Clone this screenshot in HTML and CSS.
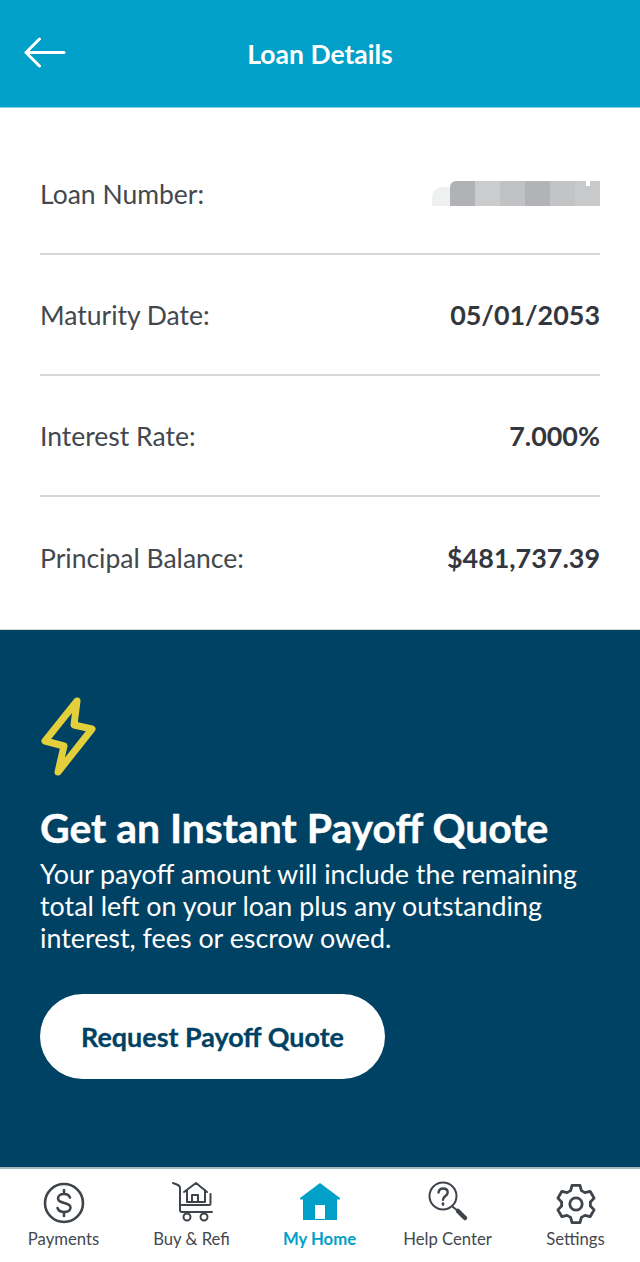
FILE: index.html
```html
<!DOCTYPE html>
<html lang="en">
<head>
  <meta charset="UTF-8" />
  <title>Loan Details</title>
  <link rel="stylesheet" href="styles.css">
</head>
<body>
  <header class="topbar">
    <svg class="back" width="42" height="32" viewBox="0 0 42 32" fill="none" stroke="#fff" stroke-width="3" stroke-linecap="round" stroke-linejoin="round">
      <path d="M40 15.500H2M15.500 2L2 15.500 15.500 29"/>
    </svg>
    <h1>Loan Details</h1>
  </header>

  <section class="details">
    <div class="row">
      <span class="label">Loan Number:</span>
      <div class="mask">
        <i class="blob"></i><i class="c1"></i><i class="c2"></i><i class="c3"></i><i class="c4"></i><i class="c5"></i><i class="c6"></i>
      </div>
    </div>
    <div class="row">
      <span class="label">Maturity Date:</span>
      <span class="value">05/01/2053</span>
    </div>
    <div class="row">
      <span class="label">Interest Rate:</span>
      <span class="value">7.000%</span>
    </div>
    <div class="row">
      <span class="label">Principal Balance:</span>
      <span class="value">$481,737.39</span>
    </div>
  </section>

  <section class="payoff">
    <svg class="bolt" width="58" height="82" viewBox="0 0 58 82" fill="none" stroke="#e3cf3c" stroke-width="7" stroke-linejoin="round">
      <path d="M37 5L5 45 24 50 18 76 52 33 34 29z"/>
    </svg>
    <h2>Get an Instant Payoff Quote</h2>
    <p>Your payoff amount will include the remaining total left on your loan plus any outstanding interest, fees or escrow owed.</p>
    <a class="quote-btn">Request Payoff Quote</a>
  </section>

  <nav class="tabs">
    <div class="tab">
      <svg width="44" height="44" viewBox="0 -1 44 44" fill="none" stroke="#3f444b" stroke-width="2.600" stroke-linecap="round">
        <circle cx="22" cy="22" r="19"/>
        <path d="M28 16.500c-1-2.500-3-3.500-6-3.500-3.500 0-6 1.700-6 4.500 0 6 12.500 3 12.500 9 0 2.800-2.700 4.500-6.500 4.500-3.300 0-5.500-1.300-6.500-4M22 9v4M22 31v4"/>
      </svg>
      <span>Payments</span>
    </div>
    <div class="tab">
      <svg width="44" height="44" viewBox="0 0 44 44" fill="none" stroke="#3f444b" stroke-width="2" stroke-linecap="round" stroke-linejoin="round">
        <path d="M3 3l5 2q2 1 2 3v22q0 2 2 2h30M10 25h29q1.500 0 1.500-1.500V14"/>
        <path d="M14 12L26 3l11 9M17 10v12h18V10M22 22v-7h6v7"/>
        <circle cx="17" cy="37" r="3.500"/>
        <circle cx="34" cy="37" r="3.500"/>
      </svg>
      <span>Buy &amp; Refi</span>
    </div>
    <div class="tab active">
      <svg width="44" height="44" viewBox="0 0 44 44">
        <path fill="#00a0c8" fill-rule="evenodd" d="M22 3L2 18v1.500h3V40h34V19.500h3V18zM17 25h10v14H17z"/>
      </svg>
      <span>My Home</span>
    </div>
    <div class="tab">
      <svg width="44" height="44" viewBox="0 0 44 44" fill="none" stroke="#3f444b" stroke-width="2" stroke-linecap="round">
        <circle cx="17" cy="16" r="13.500"/>
        <path d="M12.500 12.500c.5-2.800 2.200-4 4.500-4 2.800 0 4.700 1.600 4.700 3.900 0 3.600-4.700 3.600-4.700 7.400" stroke-width="2.400"/>
        <path d="M17 23.500v1" stroke-width="2.600"/>
        <path d="M27 27l5 4"/>
        <path d="M32 31l7 7" stroke-width="4.500"/>
      </svg>
      <span>Help Center</span>
    </div>
    <div class="tab">
      <svg width="44" height="44" viewBox="0 0 44 44" fill="none" stroke="#3f444b" stroke-width="2.800" stroke-linejoin="round">
        <g transform="translate(22 24)">
          <path d="M-5.400-13.400L-4-18.600H4L5.400-13.400 8.900-11.400 14.100-12.700 18.100-5.900 14.400-2V2L18.100 5.900 14.100 12.700 8.900 11.400 5.400 13.400 4 18.600H-4L-5.400 13.400-8.900 11.400-14.100 12.700-18.100 5.900-14.400 2V-2L-18.100-5.900-14.100-12.700-8.900-11.400z"/>
          <circle r="6.200"/>
        </g>
      </svg>
      <span>Settings</span>
    </div>
  </nav>
</body>
</html>
```

FILE: styles.css
```css
* {
  box-sizing: border-box;
}
body {
  margin: 0;
  width: 640px;
  height: 1262px;
  background: #fff;
  color: #43484e;
  font-family: Lato, "Open Sans", sans-serif;
  display: flex;
  flex-direction: column;
  overflow: hidden;
}

.topbar {
  height: 108px;
  flex: none;
  background: #00a0c8;
  border-bottom: 1px solid #7fd6ea;
  display: flex;
  align-items: center;
  justify-content: center;
  position: relative;
}
.topbar h1 {
  margin: 0;
  color: #fff;
  font-size: 26.500px;
  font-weight: 700;
}
.back {
  position: absolute;
  left: 24px;
  top: 37px;
}

.details {
  height: 522px;
  flex: none;
  padding: 26px 40px 0;
  border-bottom: 1px solid #d8d8d8;
}
.row {
  height: 121px;
  display: flex;
  align-items: center;
  justify-content: space-between;
  border-bottom: 2px solid #d8d8d8;
}
.row:last-child {
  border-bottom: none;
}
.label {
  font-size: 26.500px;
}
.value {
  font-size: 26.900px;
  font-weight: 700;
  color: #33373d;
}
.mask {
  display: flex;
  height: 25px;
}
.mask i {
  width: 25px;
  background: #c6c8ca;
}
.mask .blob {
  width: 18px;
  margin-top: 6px;
  background: #eff0f0;
  border-radius: 10px 0 0 0;
}
.mask .c1 {
  background: #b0b2b5;
  border-radius: 6px 0 0 0;
}
.mask .c2 {
  background: #cbcccd;
}
.mask .c3 {
  background: #c0c2c4;
}
.mask .c4 {
  background: #b1b3b6;
}
.mask .c5 {
  background: #c3c4c6;
}
.mask .c6 {
  background: #c8c9cb;
  position: relative;
}
.mask .c6::after {
  content: "";
  position: absolute;
  top: 0;
  left: 11px;
  width: 4px;
  height: 5px;
  background: #fff;
}

.payoff {
  flex: 1;
  background: #004263;
  color: #fff;
  padding: 66px 40px 0;
}
.bolt {
  display: block;
}
.payoff h2 {
  margin: 26px 0 6px;
  font-size: 40.900px;
  line-height: 48px;
  font-weight: 700;
  -webkit-text-stroke: 0.4px #fff;
}
.payoff p {
  margin: 0;
  font-size: 26.850px;
  line-height: 32px;
}
.quote-btn {
  margin-top: 40px;
  width: 345px;
  height: 85px;
  border-radius: 43px;
  background: #fff;
  color: #004263;
  font-size: 26.900px;
  font-weight: 700;
  -webkit-text-stroke: 0.3px #004263;
  display: flex;
  align-items: center;
  justify-content: center;
}

.tabs {
  height: 95px;
  flex: none;
  background: #fff;
  border-top: 2px solid #a9b6bd;
  display: flex;
  padding-top: 11px;
}
.tab {
  flex: 1;
  display: flex;
  flex-direction: column;
  align-items: center;
  gap: 5px;
  font-size: 16.700px;
}
.tab span {
  margin-right: 1px;
}
.tab.active {
  color: #00a0c8;
  font-weight: 700;
}
```
